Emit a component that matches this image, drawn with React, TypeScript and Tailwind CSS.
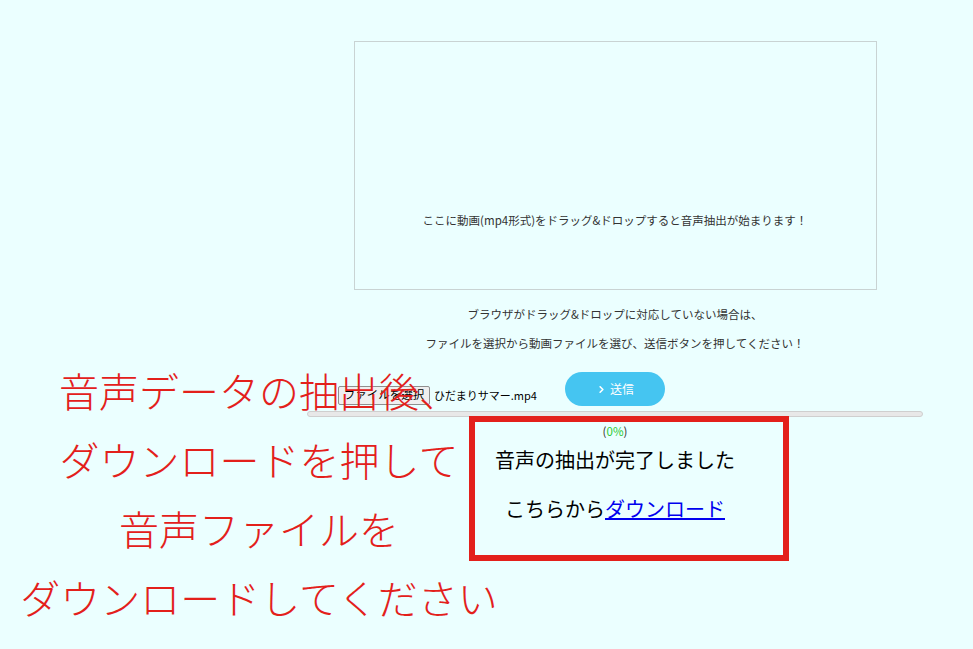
import { ChevronRight } from "lucide-react";

const FONT = '"Noto Sans CJK JP", "Noto Sans", sans-serif';

const NOTES = [
  "音声データの抽出後、",
  "ダウンロードを押して",
  "音声ファイルを",
  "ダウンロードしてください",
];

function DropZone() {
  return (
    <div className="mx-auto h-[249px] w-[523px] border border-[#c9d3d3] pt-[170px] text-center text-[11.5px] leading-[16px] text-[#333]">
      ここに動画(mp4形式)をドラッグ&ドロップすると音声抽出が始まります！
    </div>
  );
}

function UploadRow() {
  return (
    <div className="mt-[21px] flex h-[34px] items-center pl-[31px]">
      <div className="mt-[12px] flex items-center">
        <span className="flex h-[19px] w-[92px] items-center justify-center rounded-[2px] border border-[#8f8f8f] bg-[#efefef] text-[11.5px] text-black">
          ファイルを選択
        </span>
        <span className="ml-[4px] text-[11px] text-black">ひだまりサマー.mp4</span>
      </div>
      <button className="ml-[28px] flex h-[34px] w-[100px] items-center justify-center gap-[3px] rounded-full bg-[#45c5f1] text-[12px] text-white">
        <ChevronRight size={11} strokeWidth={3.5} />
        <span>送信</span>
      </button>
    </div>
  );
}

export default function App() {
  return (
    <div className="relative h-[649px] w-full overflow-hidden bg-[#ebffff]" style={{ fontFamily: FONT }}>
      <div className="ml-[307px] w-[616px] pt-[41px]">
        <DropZone />

        <p className="mt-[16px] text-center text-[11.5px] leading-[16px] text-[#333]">
          ブラウザがドラッグ&ドロップに対応していない場合は、
        </p>
        <p className="mt-[13px] text-center text-[11.5px] leading-[16px] text-[#333]">
          ファイルを選択から動画ファイルを選び、送信ボタンを押してください！
        </p>

        <UploadRow />

        <div className="mt-[5px] h-[6px] w-full rounded-full border border-[#cfcfcf] bg-[#e8e8e8]" />

        <p className="mt-[6px] text-center text-[11.5px] leading-[16px] text-[#333]">
          (<span className="text-[#2cc934]">0%</span>)
        </p>

        <p className="mt-[7px] text-center text-[20px] leading-[28px] text-black">
          音声の抽出が完了しました
        </p>
        <p className="mt-[21px] text-center text-[20px] leading-[28px] text-black">
          こちらから
          <a href="#" className="text-[#0000ee] underline">
            ダウンロード
          </a>
        </p>
      </div>

      {/* annotation overlays */}
      <div className="pointer-events-none absolute left-[469px] top-[416px] h-[145px] w-[320px] border-[6px] border-[#e3201b]" />
      <div className="pointer-events-none absolute left-0 top-[356px] w-[518px] text-center text-[40px] font-light leading-[69px] text-[#e3201b]">
        {NOTES.map((line) => (
          <div key={line}>{line}</div>
        ))}
      </div>
    </div>
  );
}
